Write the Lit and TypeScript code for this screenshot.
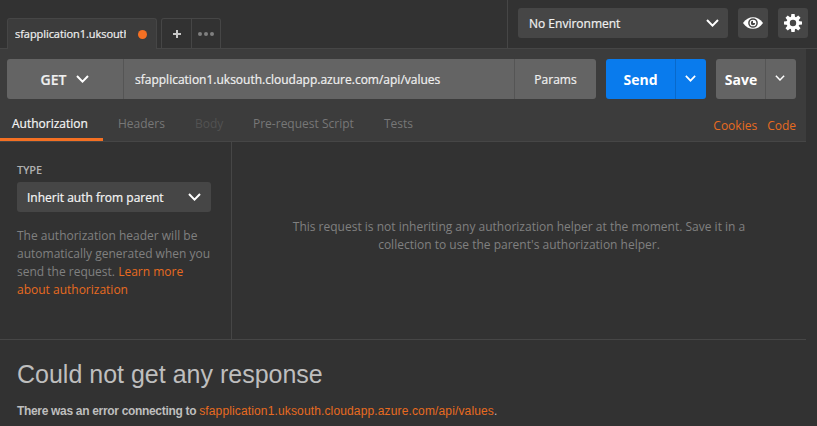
import { LitElement, html, css, svg } from "lit";
import { customElement } from "lit/decorators.js";

const chevron = (w = 13, h = 8, sw = 2) => html`<svg class="chev" width=${w} height=${h} viewBox="0 0 13 8">
  <path d="M1 1 L6.5 6.6 L12 1" fill="none" stroke="#fff" stroke-width=${sw} /></svg>`;

const teeth = [0, 45, 90, 135, 180, 225, 270, 315].map(
  (a) => svg`<path d="M-2.1 -5 L-1.6 -9 H1.6 L2.1 -5 Z" transform="rotate(${a})" />`
);

@customElement("app-root")
export class AppRoot extends LitElement {
  static styles = css`
    :host {
      display: flex;
      flex-direction: column;
      width: 817px;
      height: 426px;
      overflow: hidden;
      background: #323232;
      color: #f0f0f0;
      font: 12px/18px "Open Sans", "Noto Sans", sans-serif;
    }
    * { box-sizing: border-box; }
    svg { display: block; flex: none; }
    .top { display: flex; height: 49px; flex: none; border-bottom: 1px solid #464646; }
    .tabs { display: flex; align-items: flex-end; width: 507px; padding-left: 7px; }
    .tab {
      display: flex; align-items: center; width: 150px; height: 31px; margin-bottom: -1px;
      padding: 0 9px 0 7px; border: 1px solid #464646; border-bottom: 0;
      border-radius: 3px 3px 0 0; background: #3c3c3c; font-size: 11px;
    }
    .tab-name { width: 111px; overflow: hidden; white-space: nowrap; letter-spacing: -0.06px; }
    .dot { width: 9px; height: 9px; margin-left: auto; border-radius: 50%; background: #f47023; }
    .tools {
      display: flex; width: 60px; height: 30px; margin-left: 4px;
      border: 1px solid #464646; border-bottom: 0; border-radius: 3px 3px 0 0;
    }
    .tool { display: flex; align-items: center; justify-content: center; width: 29px; }
    .tool + .tool { border-left: 1px solid #464646; }
    .env {
      display: flex; align-items: flex-start; flex: 1; padding: 8px 9px 0 10px;
      border-left: 1px solid #464646;
    }
    .env-select {
      display: flex; align-items: center; justify-content: space-between; width: 210px; height: 30px;
      padding: 0 9px 0 11px; border-radius: 3px; background: #464646;
    }
    .env-select span, .cell span { padding-top: 2px; }
    .square {
      display: flex; align-items: center; justify-content: center; width: 30px; height: 30px;
      margin-left: 10px; border-radius: 3px; background: #464646;
    }
    .main { width: 806px; flex: 1; display: flex; flex-direction: column; }
    .builder { height: 93px; flex: none; background: #3c3c3c; border-bottom: 1px solid #464646; }
    .request { display: flex; padding: 10px 10px 0 7px; height: 50px; }
    .group { display: flex; height: 40px; border-radius: 3px; background: #646464; overflow: hidden; }
    .cell { display: flex; align-items: center; justify-content: center; }
    .cell + .cell { border-left: 1px solid #555; }
    .address { width: 589px; }
    .method { width: 116px; gap: 10px; font-size: 14px; font-weight: 600; }
    .url { width: 391px; justify-content: flex-start; padding-left: 11px; }
    .params { flex: 1; }
    .tab-name, .url, .params, .env-select span, .type-select span, .on, .method { -webkit-text-stroke: 0.2px currentColor; }
    .send { width: 100px; margin-left: 10px; background: #097bed; }
    .save { width: 80px; margin-left: 10px; }
    .action { font-size: 14px; font-weight: 700; color: #fff; }
    .send .action { width: 69px; }
    .save .action { width: 49px; padding-left: 1px; }
    .drop { width: 31px; padding: 0 2px 2px 0; }
    .save .drop { padding: 0 3px 3px 0; }
    .send .cell + .cell { border-left-color: #0869cb; }
    .nav { display: flex; height: 42px; color: #777; padding-right: 10px; }
    .nav-item { height: 42px; padding-top: 16px; white-space: nowrap; }
    .on { width: 103px; padding-left: 12px; color: #f5f5f5; border-bottom: 3px solid #f47023; }
    .headers { width: 92px; padding-left: 15px; }
    .body { width: 58px; color: #525252; }
    .script { width: 131px; }
    .links { margin-left: auto; padding-top: 18px; display: flex; gap: 10px; }
    .orange { color: #e86b20; }
    .panes { display: flex; height: 198px; flex: none; border-bottom: 1px solid #464646; }
    .left { width: 232px; padding: 19px 20px 0 17px; border-right: 1px solid #464646; color: #808080; }
    .label { height: 21px; color: #b0b0b0; font-size: 11px; font-weight: 600; letter-spacing: -0.2px; }
    .type-select {
      display: flex; align-items: center; justify-content: space-between; height: 30px;
      padding: 0 10px; border-radius: 3px; background: #464646; color: #f5f5f5;
    }
    .type-select span { padding-top: 2px; }
    .help { margin-top: 15px; white-space: nowrap; }
    .right { flex: 1; padding-top: 76px; text-align: center; color: #808080; }
    .response { padding: 19px 17px; font-family: "Liberation Sans", Arial, sans-serif; color: #bebebe; }
    .title { font-size: 25px; line-height: 30px; }
    .error { margin-top: 13px; font-size: 12px; white-space: nowrap; }
    .error b { letter-spacing: -0.32px; }
    .error .orange { letter-spacing: 0.14px; }
  `;

  render() {
    return html`
      <div class="top">
        <div class="tabs">
          <div class="tab"><span class="tab-name">sfapplication1.uksouth</span><span class="dot"></span></div>
          <div class="tools">
            <div class="tool"><svg width="8" height="8"><path d="M4 0V8M0 4H8" stroke="#c8c8c8" stroke-width="2" /></svg></div>
            <div class="tool"><svg width="16" height="4" fill="#808080"><circle cx="2" cy="2" r="2" /><circle cx="8" cy="2" r="2" /><circle cx="14" cy="2" r="2" /></svg></div>
          </div>
        </div>
        <div class="env">
          <div class="env-select"><span>No Environment</span>${chevron()}</div>
          <div class="square">
            <svg width="20" height="12" viewBox="0 0 20 12">
              <path d="M0 6C5-1.8 15-1.8 20 6C15 13.8 5 13.8 0 6Z" fill="#fff" />
              <circle cx="10" cy="6" r="4.1" fill="none" stroke="#464646" stroke-width="1.5" />
              <path d="M10 3.8V6H12.2A2.2 2.2 0 1 1 10 3.8Z" fill="#464646" />
            </svg>
          </div>
          <div class="square">
            <svg width="18" height="18" viewBox="-9 -9 18 18" fill="#fff">
              ${teeth}<circle r="4.8" fill="none" stroke="#fff" stroke-width="3.2" />
            </svg>
          </div>
        </div>
      </div>
      <div class="main">
        <div class="builder">
          <div class="request">
            <div class="group address">
              <div class="cell method"><span>GET</span>${chevron()}</div>
              <div class="cell url"><span>sfapplication1.uksouth.cloudapp.azure.com/api/values</span></div>
              <div class="cell params"><span>Params</span></div>
            </div>
            <div class="group send">
              <div class="cell action"><span>Send</span></div>
              <div class="cell drop">${chevron(11, 7)}</div>
            </div>
            <div class="group save">
              <div class="cell action"><span>Save</span></div>
              <div class="cell drop">${chevron(10, 6)}</div>
            </div>
          </div>
          <div class="nav">
            <div class="nav-item on">Authorization</div>
            <div class="nav-item headers">Headers</div>
            <div class="nav-item body">Body</div>
            <div class="nav-item script">Pre-request Script</div>
            <div class="nav-item">Tests</div>
            <div class="links orange"><span>Cookies</span><span>Code</span></div>
          </div>
        </div>
        <div class="panes">
          <div class="left">
            <div class="label">TYPE</div>
            <div class="type-select"><span>Inherit auth from parent</span>${chevron()}</div>
            <div class="help">The authorization header will be<br />automatically generated when you<br />send the request. <span class="orange">Learn more<br />about authorization</span></div>
          </div>
          <div class="right">This request is not inheriting any authorization helper at the moment. Save it in a<br />collection to use the parent's authorization helper.</div>
        </div>
        <div class="response">
          <div class="title">Could not get any response</div>
          <div class="error"><b>There was an error connecting to </b><span class="orange">sfapplication1.uksouth.cloudapp.azure.com/api/values</span>.</div>
        </div>
      </div>
    `;
  }
}
